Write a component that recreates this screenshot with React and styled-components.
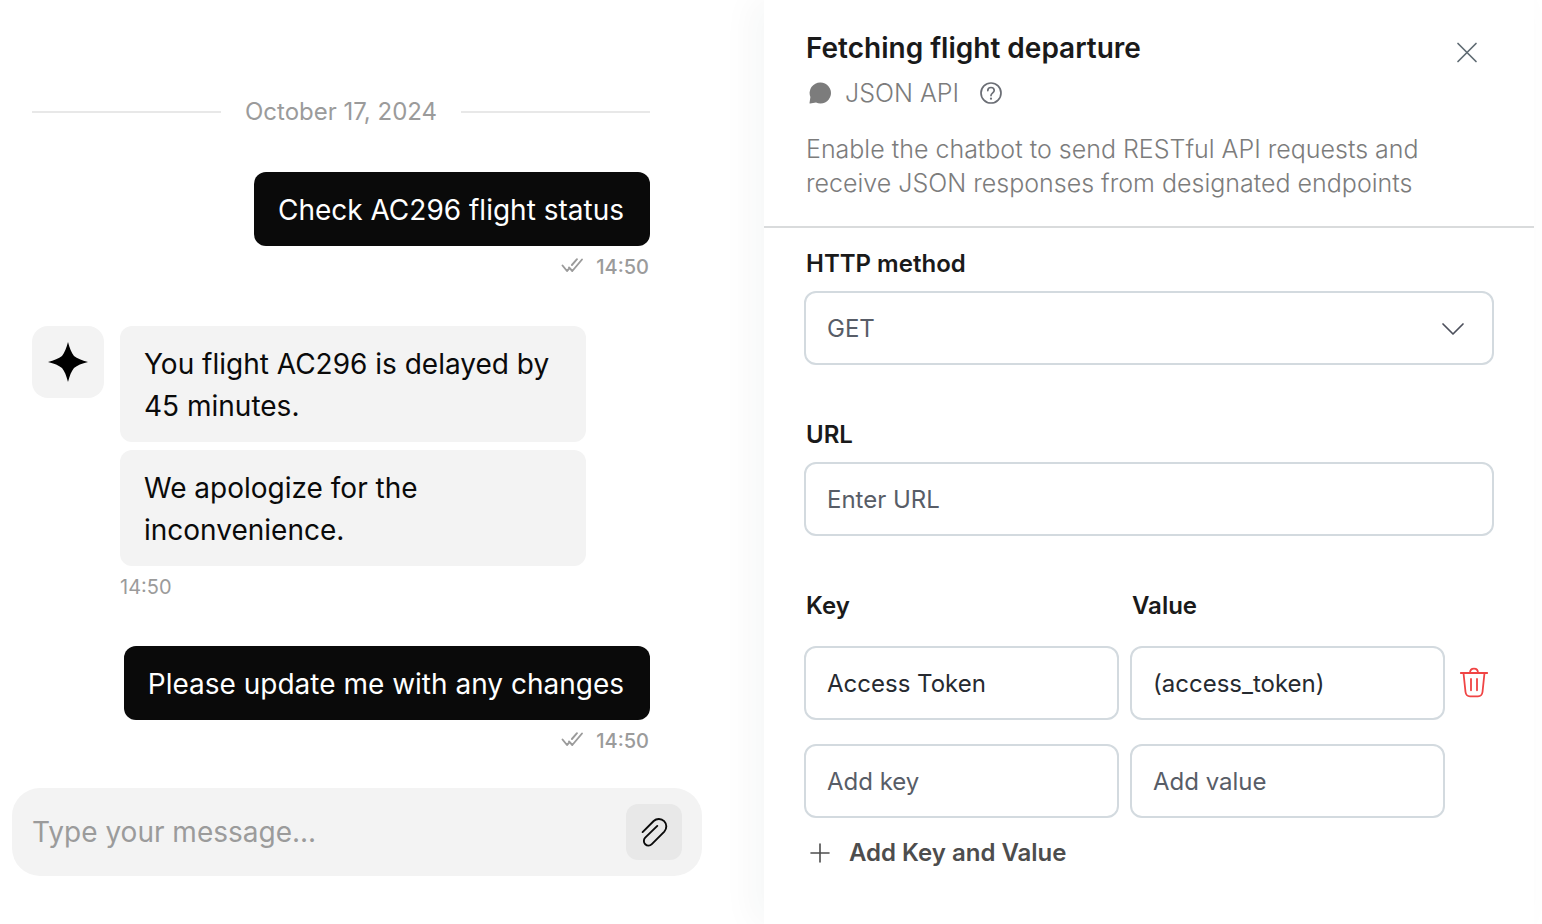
import React from "react";
import styled, { createGlobalStyle } from "styled-components";

const GlobalStyle = createGlobalStyle`
  * {
    box-sizing: border-box;
  }

  body {
    margin: 0;
    background: #fff;
    font-family: Inter, "Liberation Sans", sans-serif;
    color: #0a0a0a;
  }

  button,
  input,
  select {
    font-family: inherit;
    margin: 0;
  }

  h2,
  p {
    margin: 0;
  }

  svg {
    display: block;
    flex-shrink: 0;
  }
`;

const Page = styled.div`
  display: grid;
  grid-template-columns: 764fr 770fr;
  min-height: 100vh;
  padding-right: 8px;
  overflow: hidden;
`;

/* chat */

const Chat = styled.section`
  display: flex;
  flex-direction: column;
  justify-content: space-between;
  gap: 34px;
  padding: 94px 62px 48px 12px;
`;

const Messages = styled.div`
  display: flex;
  flex-direction: column;
  gap: 46px;
  padding: 0 52px 0 20px;
`;

const DateRow = styled.div`
  display: flex;
  align-items: center;
  gap: 24px;
  margin-bottom: -4px;
  font-size: 24px;
  line-height: 36px;
  color: #9b9b9b;

  &::before,
  &::after {
    content: "";
    flex: 1;
    height: 2px;
    background: #e8e8e8;
  }
`;

const Sent = styled.div`
  display: flex;
  flex-direction: column;
  align-items: flex-end;
  gap: 8px;
`;

const Received = styled.div`
  display: flex;
  gap: 16px;
`;

const Avatar = styled.div`
  display: flex;
  align-items: center;
  justify-content: center;
  width: 72px;
  height: 72px;
  border-radius: 16px;
  background: #f3f3f3;
`;

const Replies = styled.div`
  display: flex;
  flex-direction: column;
  gap: 8px;
  width: 466px;
`;

const Bubble = styled.p`
  padding: 17px 26px 15px 24px;
  border-radius: 12px;
  font-size: 28px;
  line-height: 42px;
  background: ${(props) => (props.$dark ? "#0a0a0a" : "#f3f3f3")};
  color: ${(props) => (props.$dark ? "#fff" : "#0a0a0a")};
`;

const Meta = styled.div`
  display: flex;
  align-items: center;
  gap: 12px;
  padding-right: 1px;
  font-size: 20px;
  font-weight: ${(props) => (props.$sent ? 500 : 400)};
  line-height: 26px;
  color: #9b9b9b;
`;

const Composer = styled.form`
  display: flex;
  align-items: center;
  height: 88px;
  padding: 0 20px;
  border-radius: 28px;
  background: #f3f3f3;
`;

const MessageInput = styled.input`
  flex: 1;
  min-width: 0;
  padding: 0;
  border: 0;
  outline: 0;
  background: transparent;
  font-size: 28px;
  line-height: 42px;
  color: #0a0a0a;

  &::placeholder {
    color: #9b9b9b;
    opacity: 1;
  }
`;

const AttachButton = styled.button`
  display: flex;
  align-items: center;
  justify-content: center;
  width: 56px;
  height: 56px;
  padding: 0;
  border: 0;
  border-radius: 12px;
  background: #e8e8e8;
  color: #0a0a0a;
  cursor: pointer;
`;

/* action panel */

const Panel = styled.section`
  background: #fff;
  box-shadow: -12px 0 32px rgba(20, 50, 40, 0.04);
`;

const PanelHeader = styled.header`
  display: flex;
  justify-content: space-between;
  align-items: flex-start;
  padding: 30px 54px 26px 42px;
  border-bottom: 2px solid #d9dbdc;
`;

const Title = styled.h2`
  font-size: 28px;
  font-weight: 600;
  line-height: 36px;
  color: #1a1a1a;
`;

const Kind = styled.div`
  display: flex;
  align-items: center;
  gap: 11px;
  margin: 10px 0 22px;
  font-size: 25px;
  font-weight: 350;
  line-height: 34px;
  color: #7c7c7c;
`;

const Description = styled.p`
  font-size: 25px;
  font-weight: 350;
  line-height: 34px;
  color: #7c7c7c;
`;

const IconButton = styled.button`
  display: flex;
  align-items: center;
  justify-content: center;
  padding: 0;
  border: 0;
  background: transparent;
  color: ${(props) => props.$color};
  cursor: pointer;
`;

const CloseButton = styled(IconButton)`
  padding: 10px 0;
`;

const HelpButton = styled(IconButton)`
  margin-left: 9px;
`;

const Form = styled.form`
  display: flex;
  flex-direction: column;
  gap: 55px;
  padding: 21px 40px;
`;

const Field = styled.div`
  display: flex;
  flex-direction: column;
  gap: 12px;
`;

const Label = styled.label`
  padding-left: 2px;
  font-size: 24px;
  font-weight: 600;
  line-height: 30px;
  color: #1a1a1a;
`;

const TextInput = styled.input`
  width: 100%;
  height: 74px;
  padding: 0 21px;
  border: 2px solid #d3dadf;
  border-radius: 12px;
  outline: 0;
  background: #fff;
  font-size: 24px;
  color: #262a30;

  &::placeholder {
    color: #585d67;
    opacity: 1;
  }
`;

const SelectWrap = styled.div`
  position: relative;
  color: #4d505c;

  svg {
    position: absolute;
    top: 25px;
    right: 29px;
    pointer-events: none;
  }
`;

const Select = styled(TextInput).attrs({ as: "select" })`
  appearance: none;
  color: #585d67;
`;

const Pairs = styled.div`
  display: grid;
  grid-template-columns: 1fr 1fr 38px;
  gap: 24px 11px;
`;

const PairLabel = styled(Label)`
  margin-bottom: 1px;
`;

const PairSpacer = styled.span``;

const PairBlock = styled.div`
  display: flex;
  flex-direction: column;
  align-items: flex-start;
  gap: 20px;

  ${Pairs} {
    width: 100%;
  }
`;

const DeleteButton = styled(IconButton)`
  padding-right: 2px;
`;

const AddButton = styled.button`
  display: flex;
  align-items: center;
  gap: 17px;
  padding: 0 4px;
  border: 0;
  background: transparent;
  font-size: 24px;
  font-weight: 600;
  line-height: 30px;
  color: #4d4d4d;
  cursor: pointer;
`;

const Svg = styled.svg.attrs((props) => ({
  fill: "none",
  stroke: "currentColor",
  strokeLinecap: "round",
  strokeLinejoin: "round",
  viewBox: `0 0 ${props.width} ${props.height}`,
  "aria-hidden": true,
}))``;

const DoubleCheck = () => (
  <Svg width="24" height="20" strokeWidth="1.9">
    <path d="M2.5 8.5L7 14L9.3 11.4M11.9 8L17 2.2M9 10.4L12.3 14L22 2.5" />
  </Svg>
);

const Star = () => (
  <Svg width="40" height="40">
    <path
      fill="#000"
      stroke="none"
      d="M20 0C21.6 6.2 23.4 10.8 26 14C29.2 16.6 33.8 18.4 40 20C33.8 21.6 29.2 23.4 26 26C23.4 29.2 21.6 33.8 20 40C18.4 33.8 16.6 29.2 14 26C10.8 23.4 6.2 21.6 0 20C6.2 18.4 10.8 16.6 14 14C16.6 10.8 18.4 6.2 20 0Z"
    />
  </Svg>
);

const Clip = () => (
  <Svg width="32" height="32" strokeWidth="1.9">
    <path d="M4.6 16.1L15.7 5A7.5 7.5 0 0 1 26.3 15.6L13.8 28.2A4.6 4.6 0 0 1 7.2 21.7L19.3 9.9" />
  </Svg>
);

const ChatIcon = () => (
  <Svg width="28" height="24">
    <path
      fill="currentColor"
      stroke="none"
      d="M14.4 1.5A10.5 10.5 0 1 1 10 21.5C8 21.9 6 22.4 4.2 22.6C3.5 22.6 3.4 22 3.6 21.4L4.4 16A10.5 10.5 0 0 1 14.4 1.5Z"
    />
  </Svg>
);

const HelpIcon = () => (
  <Svg width="24" height="24" strokeWidth="1.7">
    <circle cx="12" cy="12" r="10" />
    <path d="M8.8 9.6C8.8 7.8 10.1 6.5 12 6.5S15.2 7.8 15.2 9.5C15.2 11.9 12 11.8 12 14.6" />
    <circle cx="12" cy="17.7" r="1.1" fill="currentColor" stroke="none" />
  </Svg>
);

const CloseIcon = () => (
  <Svg width="26" height="26" strokeWidth="1.7">
    <path d="M4 3.5L22 21.5M22 3.5L4 21.5" />
  </Svg>
);

const Chevron = () => (
  <Svg width="24" height="24" strokeWidth="1.7">
    <path d="M2 8L12 18L22 8" />
  </Svg>
);

const Trash = () => (
  <Svg width="30" height="32" strokeWidth="1.8">
    <path d="M1.8 6H28.2M11 6C11 3 12.6 1.6 15 1.6S19 3 19 6M4.5 6L6.5 25C6.9 28 8.2 29.3 11 29.3H19C21.8 29.3 23.1 28 23.5 25L25.5 6M12 12V23.3M18 12V23.3" />
  </Svg>
);

const Plus = () => (
  <Svg width="24" height="24" strokeWidth="1.6">
    <path d="M12 3V21M3 12H21" />
  </Svg>
);

function SentMessage({ text, time }) {
  return (
    <Sent>
      <Bubble $dark>{text}</Bubble>
      <Meta $sent>
        <DoubleCheck />
        <span>{time}</span>
      </Meta>
    </Sent>
  );
}

export default function App() {
  return (
    <>
      <GlobalStyle />
      <Page>
        <Chat>
          <Messages>
            <DateRow>October 17, 2024</DateRow>
            <SentMessage text="Check AC296 flight status" time="14:50" />
            <Received>
              <Avatar>
                <Star />
              </Avatar>
              <Replies>
                <Bubble>You flight AC296 is delayed by 45 minutes.</Bubble>
                <Bubble>
                  We apologize for the
                  <br />
                  inconvenience.
                </Bubble>
                <Meta>14:50</Meta>
              </Replies>
            </Received>
            <SentMessage text="Please update me with any changes" time="14:50" />
          </Messages>
          <Composer>
            <MessageInput
              aria-label="Message"
              placeholder="Type your message..."
            />
            <AttachButton type="button" aria-label="Attach file">
              <Clip />
            </AttachButton>
          </Composer>
        </Chat>

        <Panel>
          <PanelHeader>
            <div>
              <Title>Fetching flight departure</Title>
              <Kind>
                <ChatIcon />
                <span>JSON API</span>
                <HelpButton type="button" aria-label="Help" $color="#6b6e75">
                  <HelpIcon />
                </HelpButton>
              </Kind>
              <Description>
                Enable the chatbot to send RESTful API requests and
                <br />
                receive JSON responses from designated endpoints
              </Description>
            </div>
            <CloseButton type="button" aria-label="Close" $color="#5f6b73">
              <CloseIcon />
            </CloseButton>
          </PanelHeader>

          <Form>
            <Field>
              <Label htmlFor="method">HTTP method</Label>
              <SelectWrap>
                <Select id="method" defaultValue="GET">
                  <option>GET</option>
                  <option>POST</option>
                </Select>
                <Chevron />
              </SelectWrap>
            </Field>
            <Field>
              <Label htmlFor="url">URL</Label>
              <TextInput id="url" placeholder="Enter URL" />
            </Field>
            <PairBlock>
              <Pairs>
                <PairLabel htmlFor="key">Key</PairLabel>
                <PairLabel htmlFor="value">Value</PairLabel>
                <PairSpacer />
                <TextInput id="key" defaultValue="Access Token" />
                <TextInput id="value" defaultValue="(access_token)" />
                <DeleteButton type="button" aria-label="Delete" $color="#f04444">
                  <Trash />
                </DeleteButton>
                <TextInput aria-label="New key" placeholder="Add key" />
                <TextInput aria-label="New value" placeholder="Add value" />
              </Pairs>
              <AddButton type="button">
                <Plus />
                Add Key and Value
              </AddButton>
            </PairBlock>
          </Form>
        </Panel>
      </Page>
    </>
  );
}
